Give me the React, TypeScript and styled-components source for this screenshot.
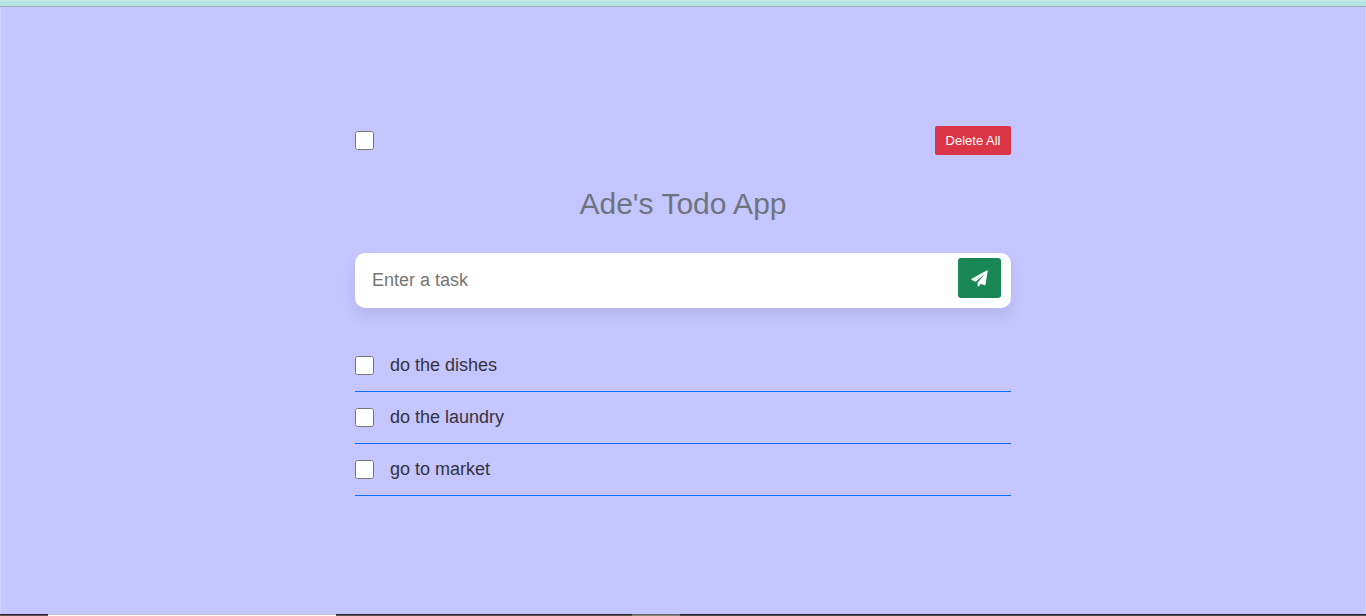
import React, { useState } from "react";
import styled, { createGlobalStyle } from "styled-components";

const GlobalStyle = createGlobalStyle`
  *, *::before, *::after { box-sizing: border-box; }
  body {
    margin: 0;
    background: #c5c5ff;
    color: #33333f;
    font-family: "Liberation Sans", Arial, sans-serif;
    font-size: 18px;
    line-height: 23px;
  }
`;

const Page = styled.div`
  display: flex;
  flex-direction: column;
  min-height: 100vh;
`;

const TopStrip = styled.div`
  height: 7px;
  background: #b8e4e4;
  border-top: 1px solid #c6e9e9;
  border-bottom: 1px solid #94b6b6;
`;

const Main = styled.main`
  flex: 1;
  padding: 119px 16px 32px;
  border: solid #d1d1ff;
  border-width: 0 1px;
`;

const Container = styled.div`
  width: 100%;
  max-width: 656px;
  margin: 0 auto;
`;

const Toolbar = styled.div`
  display: flex;
  align-items: center;
  justify-content: space-between;
  height: 29px;
`;

const Checkbox = styled.input.attrs({ type: "checkbox" })`
  flex: none;
  width: 19px;
  height: 19px;
  margin: 0;
`;

const DeleteButton = styled.button`
  height: 29px;
  width: 76px;
  padding: 0;
  border: 0;
  border-radius: 2px;
  background: #dc3545;
  color: #fff;
  font: 13px/16px "Liberation Sans", Arial, sans-serif;
`;

const Title = styled.h1`
  margin: 30px 0;
  color: #6c757d;
  font-size: 30px;
  font-weight: 400;
  line-height: 38px;
  text-align: center;
`;

const TaskForm = styled.form`
  display: flex;
  align-items: flex-start;
  height: 55px;
  padding: 5px 10px 5px 0;
  border-radius: 10px;
  background: #fff;
  box-shadow: 0 8px 16px rgba(0, 0, 0, 0.08);
`;

const TaskInput = styled.input`
  flex: 1;
  min-width: 0;
  height: 45px;
  padding: 0 17px;
  border: 0;
  outline: 0;
  background: transparent;
  color: #212529;
  font: inherit;

  &::placeholder { color: #757575; }
`;

const SendButton = styled.button`
  display: flex;
  align-items: center;
  justify-content: center;
  width: 43px;
  height: 40px;
  padding: 0;
  border: 0;
  border-radius: 3px;
  background: #198754;
  color: #fff;
`;

const TaskList = styled.ul`
  margin: 32px 0 0;
  padding: 0;
  list-style: none;
`;

const TaskRow = styled.li`
  height: 52px;
  border-bottom: 1px solid #0d6efd;
`;

const TaskLabel = styled.label`
  display: flex;
  align-items: center;
  gap: 16px;
  height: 51px;
`;

const BottomStrip = styled.div`
  display: flex;
  height: 2px;
`;

const Segment = styled.div<{ $width?: number; $top: string; $bottom: string }>`
  flex: ${(p) => (p.$width ? `0 1 ${p.$width}px` : "1")};
  background: ${(p) => p.$bottom};
  border-top: 1px solid ${(p) => p.$top};
`;

const PlaneIcon = () => (
  <svg width="17" height="17" viewBox="0 0 17 17" fill="currentColor" aria-hidden="true">
    <path d="M16.1.3c.3-.2.7.1.6.5l-2.2 14.1c-.1.4-.4.6-.8.4L9.9 13.7l-2.2 2.7c-.4.4-1.1.2-1.1-.4v-3.2l7.6-9.2-9.4 8.1-4-1.7c-.6-.2-.6-.9-.1-1.2z" />
  </svg>
);

export default function App() {
  const [tasks, setTasks] = useState(["do the dishes", "do the laundry", "go to market"]);
  const [draft, setDraft] = useState("");

  const addTask = (event: React.FormEvent) => {
    event.preventDefault();
    if (draft.trim()) {
      setTasks([...tasks, draft.trim()]);
      setDraft("");
    }
  };

  return (
    <Page>
      <GlobalStyle />
      <TopStrip />
      <Main>
        <Container>
          <Toolbar>
            <Checkbox aria-label="Select all" />
            <DeleteButton type="button" onClick={() => setTasks([])}>
              Delete All
            </DeleteButton>
          </Toolbar>
          <Title>Ade's Todo App</Title>
          <TaskForm onSubmit={addTask}>
            <TaskInput
              type="text"
              aria-label="Task"
              placeholder="Enter a task"
              value={draft}
              onChange={(event) => setDraft(event.target.value)}
            />
            <SendButton type="submit" aria-label="Add task">
              <PlaneIcon />
            </SendButton>
          </TaskForm>
          <TaskList>
            {tasks.map((task, index) => (
              <TaskRow key={index}>
                <TaskLabel>
                  <Checkbox />
                  <span>{task}</span>
                </TaskLabel>
              </TaskRow>
            ))}
          </TaskList>
        </Container>
      </Main>
      <BottomStrip>
        <Segment $width={48} $top="#2d2430" $bottom="#62535a" />
        <Segment $width={288} $top="#c3c3c0" $bottom="#f8f8f8" />
        <Segment $width={296} $top="#2d2630" $bottom="#5c5650" />
        <Segment $width={48} $top="#65635e" $bottom="#83827a" />
        <Segment $top="#24242c" $bottom="#505052" />
      </BottomStrip>
    </Page>
  );
}
